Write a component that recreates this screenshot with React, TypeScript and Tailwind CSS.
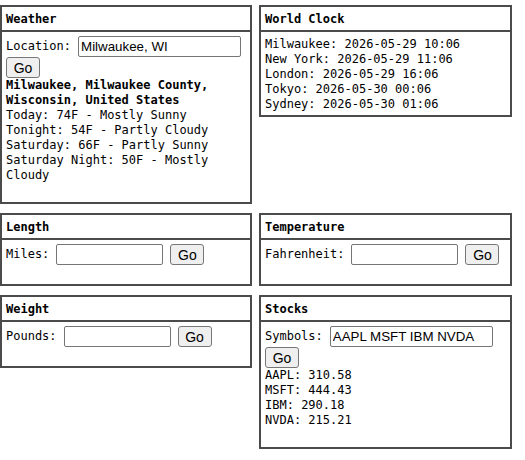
import React from 'react';

const inputCls =
  "h-[21px] border border-[#767676] rounded-[2px] bg-white px-[2px] font-['Liberation_Sans',Arial,sans-serif] text-[13.33px] text-black outline-none";
const buttonCls =
  "h-[21px] w-[34px] shrink-0 border border-[#767676] rounded-[3px] bg-[#efefef] font-['Liberation_Sans',Arial,sans-serif] text-[14px] text-black leading-none";

const Card: React.FC<{ title: string; padBottom?: boolean; children: React.ReactNode }> = ({ title, padBottom, children }) => (
  <div className="border-2 border-[#4b4b4b] bg-white">
    <div className="border-b-2 border-[#4b4b4b] px-1 pt-[5px] pb-[3px] font-bold">{title}</div>
    <div className={padBottom ? 'px-1 pt-1 pb-[19px]' : 'px-1 pt-[5px] pb-[3px]'}>{children}</div>
  </div>
);

const ConvertRow: React.FC<{ label: string }> = ({ label }) => (
  <div className="flex h-[21px] items-center gap-[7px]">
    <span>{label}</span>
    <input type="text" className={`${inputCls} w-[107px]`} />
    <button className={buttonCls}>Go</button>
  </div>
);

const clocks = [
  ['Milwaukee', '2026-05-29 10:06'],
  ['New York', '2026-05-29 11:06'],
  ['London', '2026-05-29 16:06'],
  ['Tokyo', '2026-05-30 00:06'],
  ['Sydney', '2026-05-30 01:06'],
];

const forecast = [
  'Today: 74F - Mostly Sunny',
  'Tonight: 54F - Partly Cloudy',
  'Saturday: 66F - Partly Sunny',
  'Saturday Night: 50F - Mostly Cloudy',
];

const quotes = [
  ['AAPL', '310.58'],
  ['MSFT', '444.43'],
  ['IBM', '290.18'],
  ['NVDA', '215.21'],
];

export default function App() {
  return (
    <div className="grid grid-cols-[252px_253px] items-start gap-x-[7px] gap-y-[9px] bg-white pt-[5px] font-['DejaVu_Sans_Mono',monospace] text-[12px] leading-[15px] text-black">
      <Card title="Weather" padBottom>
        <div className="flex h-[21px] items-center gap-[7px]">
          <span>Location:</span>
          <input type="text" defaultValue="Milwaukee, WI" className={`${inputCls} w-[163px]`} />
        </div>
        <div className="flex h-[21px] items-center">
          <button className={buttonCls}>Go</button>
        </div>
        <div className="font-bold">Milwaukee, Milwaukee County, Wisconsin, United States</div>
        {forecast.map((line) => (
          <div key={line}>{line}</div>
        ))}
      </Card>

      <Card title="World Clock">
        {clocks.map(([city, time]) => (
          <div key={city}>
            {city}: {time}
          </div>
        ))}
      </Card>

      <Card title="Length" padBottom>
        <ConvertRow label="Miles:" />
      </Card>

      <Card title="Temperature" padBottom>
        <ConvertRow label="Fahrenheit:" />
      </Card>

      <Card title="Weight" padBottom>
        <ConvertRow label="Pounds:" />
      </Card>

      <Card title="Stocks" padBottom>
        <div className="flex h-[21px] items-center gap-[7px]">
          <span>Symbols:</span>
          <input type="text" defaultValue="AAPL MSFT IBM NVDA" className={`${inputCls} w-[163px]`} />
        </div>
        <div className="flex h-[21px] items-center">
          <button className={buttonCls}>Go</button>
        </div>
        {quotes.map(([sym, price]) => (
          <div key={sym}>
            {sym}: {price}
          </div>
        ))}
      </Card>
    </div>
  );
}
